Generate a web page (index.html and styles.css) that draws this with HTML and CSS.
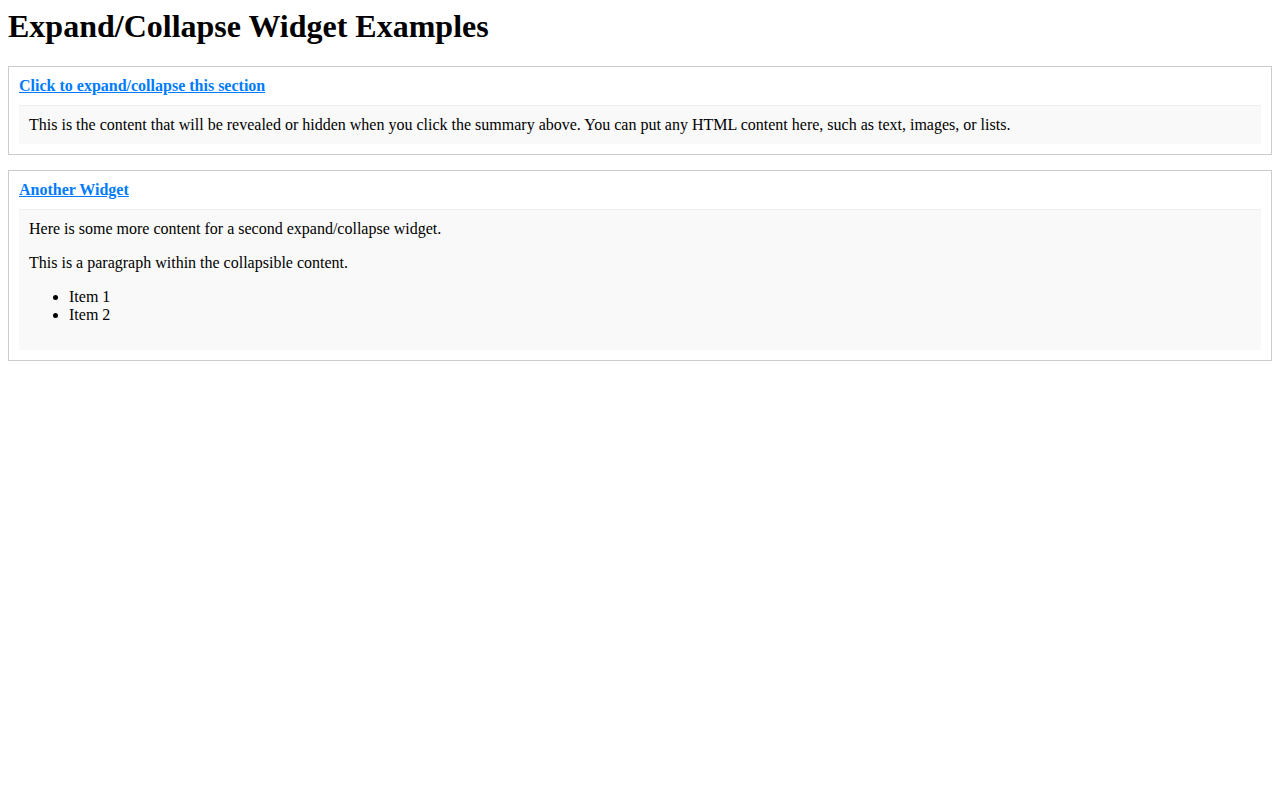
FILE: index.html
```html
<!DOCTYPE html>
<html lang="en">
<head>
  <meta charset="UTF-8" />
  <meta name="viewport" content="width=device-width, initial-scale=1.0"/>
  <title>Expand/Collapse Widget Examples</title>
  <link rel="stylesheet" href="styles.css">
</head>
<body>
  <h1>Expand/Collapse Widget Examples</h1>

  <details class="widget" open>
    <summary>Click to expand/collapse this section</summary>
    <div class="widget-content">
      This is the content that will be revealed or hidden when you click the summary above. You can put any HTML content here, such as text, images, or lists.
    </div>
  </details>

  <details class="widget" open>
    <summary>Another Widget</summary>
    <div class="widget-content">
      Here is some more content for a second expand/collapse widget.
      <p>This is a paragraph within the collapsible content.</p>
      <ul>
        <li>Item 1</li>
        <li>Item 2</li>
      </ul>
    </div>
  </details>
</body>
</html>
```

FILE: styles.css
```css
body {
  margin: 8px;
  font-family: "Liberation Serif", "Times New Roman", serif;
  font-size: 16px;
  color: #000;
  background: #fff;
}

h1 {
  font-size: 2em;
  margin: 0 0 21px;
}

.widget {
  border: 1px solid #ccc;
  padding: 10px;
  margin-bottom: 15px;
}

.widget summary {
  display: block;
  font-weight: bold;
  font-size: 1em;
  line-height: 18px;
  color: #007bff;
  text-decoration: underline;
  cursor: pointer;
  margin-bottom: 10px;
}

.widget summary::-webkit-details-marker {
  display: none;
}

.widget-content {
  background: #f9f9f9;
  border-top: 1px solid #eee;
  padding: 10px;
}
```
